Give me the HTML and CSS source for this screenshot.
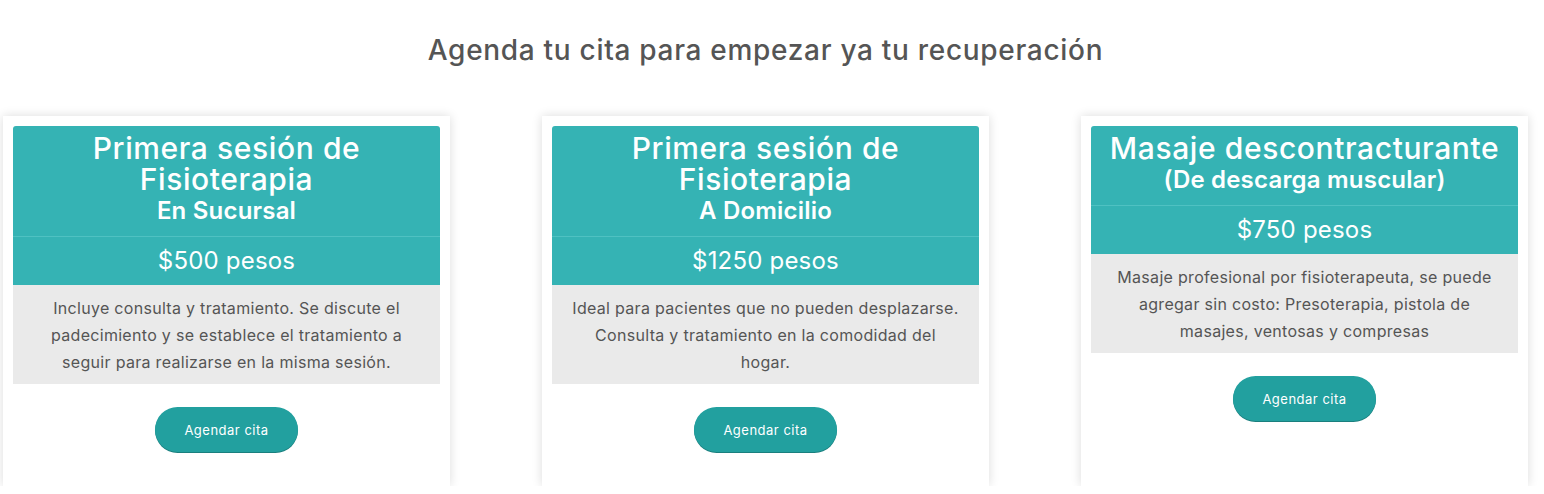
FILE: index.html
```html
<!DOCTYPE html>
<html lang="es">
<head>
<meta charset="utf-8">
<link rel="stylesheet" href="styles.css">
<title>Agenda tu cita</title>
</head>
<body>
<section class="pricing">
  <h2 class="pricing-title">Agenda tu cita para empezar ya tu recuperación</h2>
  <div class="cards">
    <div class="card">
      <div class="card-head">
        <h3 class="card-name">Primera sesión de Fisioterapia</h3>
        <div class="card-sub">En Sucursal</div>
      </div>
      <div class="card-price">$500 pesos</div>
      <p class="card-desc">Incluye consulta y tratamiento. Se discute el padecimiento y se establece el tratamiento a seguir para realizarse en la misma sesión.</p>
      <a class="card-btn" href="#">Agendar cita</a>
    </div>
    <div class="card">
      <div class="card-head">
        <h3 class="card-name">Primera sesión de Fisioterapia</h3>
        <div class="card-sub">A Domicilio</div>
      </div>
      <div class="card-price">$1250 pesos</div>
      <p class="card-desc">Ideal para pacientes que no pueden desplazarse. Consulta y tratamiento en la comodidad del hogar.</p>
      <a class="card-btn" href="#">Agendar cita</a>
    </div>
    <div class="card">
      <div class="card-head">
        <h3 class="card-name">Masaje descontracturante</h3>
        <div class="card-sub">(De descarga muscular)</div>
      </div>
      <div class="card-price">$750 pesos</div>
      <p class="card-desc">Masaje profesional por fisioterapeuta, se puede agregar sin costo: Presoterapia, pistola de masajes, ventosas y compresas</p>
      <a class="card-btn" href="#">Agendar cita</a>
    </div>
  </div>
</section>
</body>
</html>
```
FILE: styles.css
```css
* { box-sizing: border-box; }
html, body { margin: 0; padding: 0; background: #fff; }
body { font-family: Inter, "DejaVu Sans", sans-serif; color: #555; }

.pricing {
  width: 1525px;
  margin-left: 3px;
  padding-top: 33px;
}
.pricing-title {
  margin: 0;
  text-align: center;
  font-size: 28px;
  line-height: 34px;
  font-weight: 500;
  letter-spacing: 0.7px;
  color: #555;
}
.cards {
  display: flex;
  gap: 92px;
  margin-top: 49px;
  align-items: stretch;
}
.card {
  width: 447px;
  height: 370px;
  background: #fff;
  box-shadow: 0 0 10px rgba(0,0,0,0.14);
  padding: 10px;
  display: flex;
  flex-direction: column;
  align-items: center;
}
.card-head {
  align-self: stretch;
  background: #35b3b4;
  border-radius: 3px 3px 0 0;
  color: #fff;
  text-align: center;
  padding: 7px 10px 10px;
  border-bottom: 1px solid #4fc1c2;
}
.card-name {
  margin: 0;
  font-size: 30px;
  line-height: 31px;
  font-weight: 500;
  letter-spacing: 0.6px;
}
.card-sub {
  font-size: 24px;
  line-height: 31px;
  font-weight: 600;
  letter-spacing: 0.2px;
}
.card-price {
  align-self: stretch;
  background: #35b3b4;
  color: #fff;
  text-align: center;
  font-size: 24px;
  line-height: 48px;
  font-weight: 400;
  letter-spacing: 0.2px;
}
.card-desc {
  align-self: stretch;
  margin: 0;
  background: #eaeaea;
  text-align: center;
  font-size: 16px;
  line-height: 27px;
  letter-spacing: 0.3px;
  padding: 10px 18px 8px;
  color: #555;
}
.card-btn {
  margin-top: 23px;
  width: 143px;
  height: 45px;
  border-radius: 23px;
  background: #22a09f;
  box-shadow: 0 1px 0 #1a7f7e;
  color: #fff;
  text-decoration: none;
  font-size: 13px;
  letter-spacing: 0.5px;
  display: flex;
  align-items: center;
  justify-content: center;
}
```
